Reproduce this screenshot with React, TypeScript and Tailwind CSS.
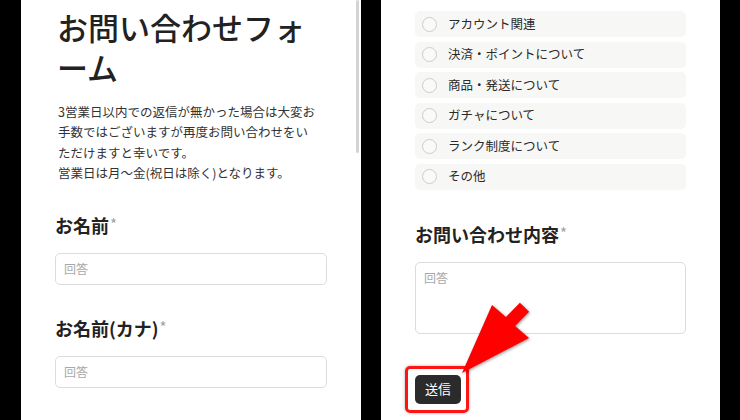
import React from "react";

const categories = [
    "アカウント関連",
    "決済・ポイントについて",
    "商品・発送について",
    "ガチャについて",
    "ランク制度について",
    "その他",
];

const Required = () => (
    <span className="relative -top-[3px] ml-[1px] text-[15px] leading-none font-normal text-[#a3a3a3]">*</span>
);

const FieldLabel = ({ children }: { children: React.ReactNode }) => (
    <div className="h-[26px] text-[18px] leading-[26px] font-bold text-[#222]">
        {children}
        <Required />
    </div>
);

const TextInput = () => (
    <input
        readOnly
        placeholder="回答"
        className="mt-[15px] block w-full h-[32px] rounded-[5px] border border-[#dcdcdc] bg-white px-[8px] text-[12px] outline-none placeholder:text-[#a8a8a8]"
    />
);

export default function App() {
    return (
        <div className="relative w-[740px] h-[420px] overflow-hidden bg-black font-['Noto_Sans_CJK_JP','Noto_Sans',sans-serif]">
            <div className="flex h-full pl-[21px] gap-[20px]">
                {/* left: top of the form */}
                <section className="relative w-[340px] h-full bg-white px-[34px] pt-[7px]">
                    <h1 className="pl-[2px] text-[31px] leading-[40px] font-medium text-[#222]">
                        <span className="block">お問い合わせフォ</span>
                        <span className="block">ーム</span>
                    </h1>
                    <p className="mt-[15px] pl-[3px] text-[12.5px] leading-[20.4px] text-[#333]">
                        3営業日以内での返信が無かった場合は大変お
                        <br />
                        手数ではございますが再度お問い合わせをい
                        <br />
                        ただけますと幸いです。
                        <br />
                        営業日は月～金(祝日は除く)となります。
                    </p>

                    <div className="mt-[28px]">
                        <FieldLabel>お名前</FieldLabel>
                        <TextInput />
                    </div>
                    <div className="mt-[30px]">
                        <FieldLabel>お名前(カナ)</FieldLabel>
                        <TextInput />
                    </div>

                    <div className="absolute right-[2px] top-0 w-[3px] h-[153px] rounded-full bg-[#d4d4d4]"></div>
                </section>

                {/* right: category + message */}
                <section className="w-[339px] h-full bg-white px-[34px] pt-[11px]">
                    <div className="flex flex-col gap-[4.5px]">
                        {categories.map((label) => (
                            <div
                                key={label}
                                className="flex items-center h-[26px] rounded-[5px] bg-[#f7f7f5] pl-[7px]"
                            >
                                <span className="w-[15px] h-[15px] rounded-full border-[1.5px] border-[#cccccc] bg-[#fafafa]"></span>
                                <span className="ml-[11px] text-[12.5px] text-[#2a2a2a]">{label}</span>
                            </div>
                        ))}
                    </div>

                    <div className="mt-[31px]">
                        <FieldLabel>お問い合わせ内容</FieldLabel>
                        <textarea
                            readOnly
                            placeholder="回答"
                            className="mt-[15px] block w-full h-[72px] resize-none rounded-[5px] border border-[#dcdcdc] bg-white px-[8px] pt-[6px] text-[12px] outline-none placeholder:text-[#a8a8a8]"
                        />
                    </div>

                    <div className="relative mt-[41px] inline-block">
                        <button className="w-[46px] h-[29px] rounded-[5px] bg-[#2b2b2b] text-[13px] text-white">
                            送信
                        </button>
                        <span className="pointer-events-none absolute -left-[10px] -right-[8px] -top-[9px] -bottom-[9px] rounded-[5px] border-[3px] border-[#ff1414] shadow-[0_0_3px_rgba(0,0,0,0.35)]"></span>
                    </div>
                </section>
            </div>

            {/* annotation arrow */}
            <svg
                className="pointer-events-none absolute left-0 top-0 drop-shadow-[1px_1px_1.5px_rgba(0,0,0,0.4)]"
                width="740"
                height="420"
                viewBox="0 0 740 420"
            >
                <polygon
                    points="462,373 492,305 505.9,317 519.9,302.7 529.1,311.7 515.1,326 529,338"
                    fill="#ff0000"
                />
            </svg>
        </div>
    );
}
